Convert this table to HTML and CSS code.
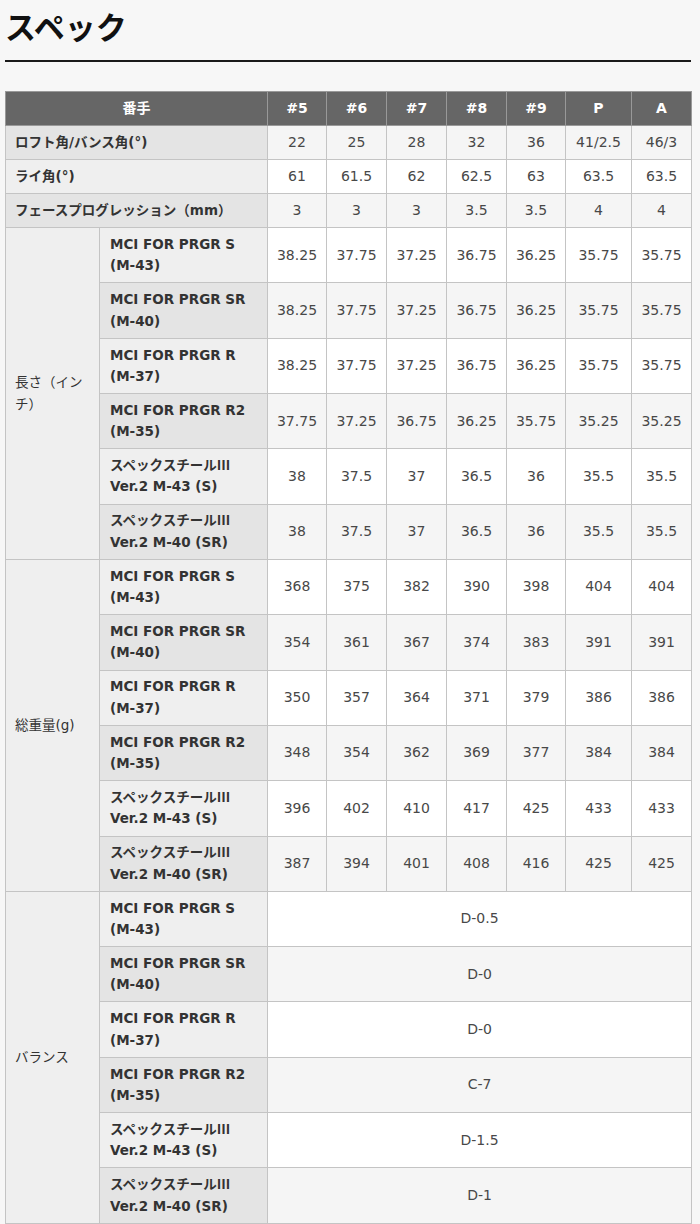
FILE: index.html
```html
<!DOCTYPE html>
<html lang="ja">
<head>
<meta charset="utf-8">
<title>スペック</title>
<link rel="stylesheet" href="styles.css">
</head>
<body>
<div class="page">
  <h2 class="title">スペック</h2>
  <table class="spec">
    <colgroup>
      <col class="c-group"><col class="c-sub"><col class="c-n"><col class="c-n6"><col class="c-n6"><col class="c-n6"><col class="c-n"><col class="c-p"><col class="c-a">
    </colgroup>
    <thead>
      <tr><th colspan="2">番手</th><th>#5</th><th>#6</th><th>#7</th><th>#8</th><th>#9</th><th>P</th><th>A</th></tr>
    </thead>
    <tbody>
      <tr class="odd"><th colspan="2">ロフト角/バンス角(°)</th><td>22</td><td>25</td><td>28</td><td>32</td><td>36</td><td>41/2.5</td><td>46/3</td></tr>
      <tr class="even"><th colspan="2">ライ角(°)</th><td>61</td><td>61.5</td><td>62</td><td>62.5</td><td>63</td><td>63.5</td><td>63.5</td></tr>
      <tr class="odd"><th colspan="2">フェースプログレッション（mm）</th><td>3</td><td>3</td><td>3</td><td>3.5</td><td>3.5</td><td>4</td><td>4</td></tr>

      <tr class="even"><th rowspan="6" class="group">長さ（インチ）</th><th class="sub">MCI FOR PRGR S<br>(M-43)</th><td>38.25</td><td>37.75</td><td>37.25</td><td>36.75</td><td>36.25</td><td>35.75</td><td>35.75</td></tr>
      <tr class="odd"><th class="sub">MCI FOR PRGR SR<br>(M-40)</th><td>38.25</td><td>37.75</td><td>37.25</td><td>36.75</td><td>36.25</td><td>35.75</td><td>35.75</td></tr>
      <tr class="even"><th class="sub">MCI FOR PRGR R<br>(M-37)</th><td>38.25</td><td>37.75</td><td>37.25</td><td>36.75</td><td>36.25</td><td>35.75</td><td>35.75</td></tr>
      <tr class="odd"><th class="sub">MCI FOR PRGR R2<br>(M-35)</th><td>37.75</td><td>37.25</td><td>36.75</td><td>36.25</td><td>35.75</td><td>35.25</td><td>35.25</td></tr>
      <tr class="even"><th class="sub">スペックスチール<span class="rn">Ⅲ</span><br>Ver.2 M-43 (S)</th><td>38</td><td>37.5</td><td>37</td><td>36.5</td><td>36</td><td>35.5</td><td>35.5</td></tr>
      <tr class="odd"><th class="sub">スペックスチール<span class="rn">Ⅲ</span><br>Ver.2 M-40 (SR)</th><td>38</td><td>37.5</td><td>37</td><td>36.5</td><td>36</td><td>35.5</td><td>35.5</td></tr>

      <tr class="even"><th rowspan="6" class="group">総重量(g)</th><th class="sub">MCI FOR PRGR S<br>(M-43)</th><td>368</td><td>375</td><td>382</td><td>390</td><td>398</td><td>404</td><td>404</td></tr>
      <tr class="odd"><th class="sub">MCI FOR PRGR SR<br>(M-40)</th><td>354</td><td>361</td><td>367</td><td>374</td><td>383</td><td>391</td><td>391</td></tr>
      <tr class="even"><th class="sub">MCI FOR PRGR R<br>(M-37)</th><td>350</td><td>357</td><td>364</td><td>371</td><td>379</td><td>386</td><td>386</td></tr>
      <tr class="odd"><th class="sub">MCI FOR PRGR R2<br>(M-35)</th><td>348</td><td>354</td><td>362</td><td>369</td><td>377</td><td>384</td><td>384</td></tr>
      <tr class="even"><th class="sub">スペックスチール<span class="rn">Ⅲ</span><br>Ver.2 M-43 (S)</th><td>396</td><td>402</td><td>410</td><td>417</td><td>425</td><td>433</td><td>433</td></tr>
      <tr class="odd"><th class="sub">スペックスチール<span class="rn">Ⅲ</span><br>Ver.2 M-40 (SR)</th><td>387</td><td>394</td><td>401</td><td>408</td><td>416</td><td>425</td><td>425</td></tr>

      <tr class="even"><th rowspan="6" class="group">バランス</th><th class="sub">MCI FOR PRGR S<br>(M-43)</th><td colspan="7">D-0.5</td></tr>
      <tr class="odd"><th class="sub">MCI FOR PRGR SR<br>(M-40)</th><td colspan="7">D-0</td></tr>
      <tr class="even"><th class="sub">MCI FOR PRGR R<br>(M-37)</th><td colspan="7">D-0</td></tr>
      <tr class="odd"><th class="sub">MCI FOR PRGR R2<br>(M-35)</th><td colspan="7">C-7</td></tr>
      <tr class="even"><th class="sub">スペックスチール<span class="rn">Ⅲ</span><br>Ver.2 M-43 (S)</th><td colspan="7">D-1.5</td></tr>
      <tr class="odd"><th class="sub">スペックスチール<span class="rn">Ⅲ</span><br>Ver.2 M-40 (SR)</th><td colspan="7">D-1</td></tr>
    </tbody>
  </table>
</div>
</body>
</html>
```

FILE: styles.css
```css
html, body {
  margin: 0;
  padding: 0;
  background: #f7f7f7;
}
.page {
  padding: 0 9px 0 5px;
  font-family: "DejaVu Sans", "Noto Sans CJK JP", sans-serif;
  color: #333;
}
.title {
  margin: 0;
  padding: 7px 0 15px;
  font-family: "Noto Sans CJK JP", sans-serif;
  font-size: 31px;
  line-height: 38px;
  font-weight: 700;
  color: #111;
  border-bottom: 2px solid #1a1a1a;
}
.spec {
  margin-top: 29px;
  width: 686px;
  table-layout: fixed;
  border-collapse: collapse;
  font-size: 14px;
  line-height: 21.3px;
}
.c-group { width: 94px; }
.c-sub { width: 168px; }
.c-n { width: 59px; }
.c-n6 { width: 60px; }
.c-p { width: 66px; }
.c-a { width: 60px; }
.spec th, .spec td {
  border: 1px solid #c4c4c4;
  padding: 5.86px 9px;
}
.spec thead th {
  background: #666;
  color: #fff;
  font-weight: 700;
  text-align: center;
  border-color: #999;
}
.spec tbody th {
  text-align: left;
  font-weight: 700;
  color: #333;
  font-size: 13.5px;
}
.spec td {
  text-align: center;
  color: #484848;
  padding-left: 2px;
  padding-right: 2px;
}
.spec tr.odd td { background: #f5f5f5; }
.spec tr.even td { background: #fff; }
.spec tr.odd th { background: #e4e4e4; }
.spec tr.even th { background: #efefef; }
.spec th.sub { padding-left: 10px; padding-right: 4px; }
.spec th.group { font-weight: 400; }
.rn {
  font-family: "Noto Sans CJK JP", sans-serif;
  line-height: 0;
}
```
